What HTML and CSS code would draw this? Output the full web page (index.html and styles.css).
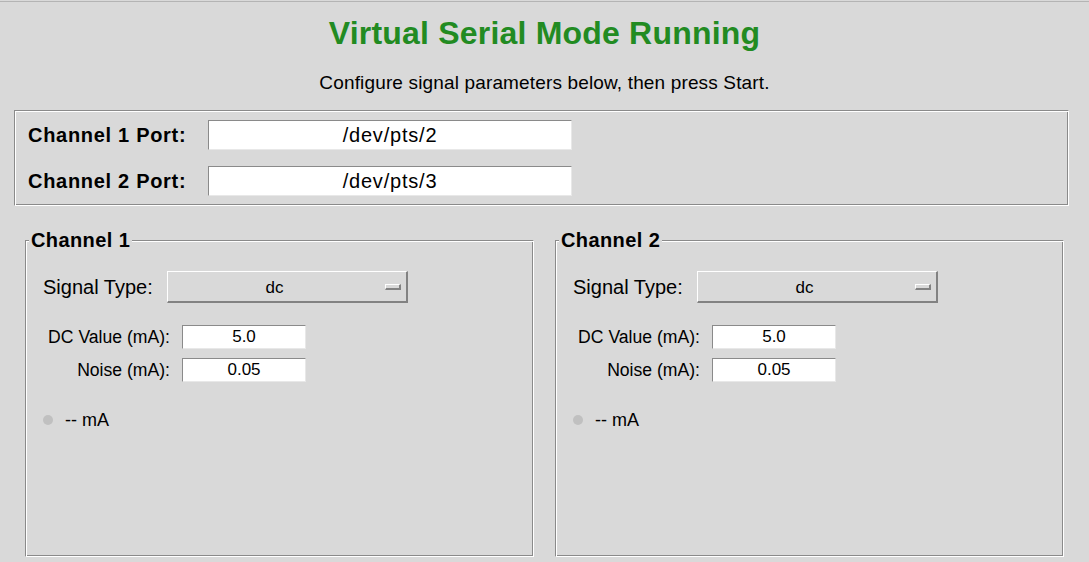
FILE: index.html
```html
<!DOCTYPE html>
<html>

<head>
    <meta charset="utf-8">
    <title>Virtual Serial Mode</title>
    <link rel="stylesheet" href="styles.css">
</head>

<body>
    <div class="app">
        <header class="intro">
            <h1 class="title">Virtual Serial Mode Running</h1>
            <p class="subtitle">Configure signal parameters below, then press Start.</p>
        </header>

        <section class="ports">
            <label class="port-label" for="port1">Channel 1 Port:</label>
            <input class="port-entry" id="port1" type="text" value="/dev/pts/2">
            <label class="port-label" for="port2">Channel 2 Port:</label>
            <input class="port-entry" id="port2" type="text" value="/dev/pts/3">
        </section>

        <div class="channels">
            <fieldset class="channel">
                <legend>Channel 1</legend>
                <div class="signal-row">
                    <span class="signal-label">Signal Type:</span>
                    <div class="option-menu">
                        <span class="option-text">dc</span>
                        <span class="indicator"></span>
                    </div>
                </div>
                <div class="params">
                    <label for="dc1">DC Value (mA):</label>
                    <input class="param-entry" id="dc1" type="text" value="5.0">
                    <label for="noise1">Noise (mA):</label>
                    <input class="param-entry" id="noise1" type="text" value="0.05">
                </div>
                <div class="status">
                    <span class="dot"></span>
                    <span class="reading">-- mA</span>
                </div>
            </fieldset>

            <fieldset class="channel">
                <legend>Channel 2</legend>
                <div class="signal-row">
                    <span class="signal-label">Signal Type:</span>
                    <div class="option-menu">
                        <span class="option-text">dc</span>
                        <span class="indicator"></span>
                    </div>
                </div>
                <div class="params">
                    <label for="dc2">DC Value (mA):</label>
                    <input class="param-entry" id="dc2" type="text" value="5.0">
                    <label for="noise2">Noise (mA):</label>
                    <input class="param-entry" id="noise2" type="text" value="0.05">
                </div>
                <div class="status">
                    <span class="dot"></span>
                    <span class="reading">-- mA</span>
                </div>
            </fieldset>
        </div>
    </div>
</body>

</html>
```

FILE: styles.css
```css
body {
    margin: 0;
    padding: 1px 0 0 0;
    background-color: #d9d9d9;
    color: #000;
    font-family: "Liberation Sans", Arial, sans-serif;
}

.app {
    height: 560px;
    display: flex;
    flex-direction: column;
    border-top: 1px solid #b4b4b4;
}

.intro {
    text-align: center;
}

.title {
    margin: 13px 0 0 0;
    font-size: 32px;
    line-height: 36px;
    font-weight: bold;
    letter-spacing: 0.2px;
    color: #228b22;
}

.subtitle {
    margin: 21px 0 0 0;
    font-size: 19px;
    line-height: 22px;
    letter-spacing: 0.15px;
}

/* groove look: dark/light outer ring, light/dark inner ring */
.ports,
.channel {
    border: 1px solid;
    border-color: #8a8a8a #fff #fff #8a8a8a;
    box-shadow: inset 1px 1px 0 #fff, inset -1px -1px 0 #8a8a8a;
}

.ports {
    margin: 16px 20px 0 14px;
    padding: 9px 0 9px 13px;
    display: grid;
    grid-template-columns: 180px 364px;
    row-gap: 16px;
    align-items: center;
}

.port-label {
    font-size: 20px;
    font-weight: bold;
    letter-spacing: 0.7px;
}

.port-entry {
    box-sizing: border-box;
    width: 364px;
    height: 30px;
    margin: 0;
    padding: 0;
    border: 1px solid;
    border-color: #8a8a8a #e8e8e8 #e8e8e8 #8a8a8a;
    background: #fff;
    font-family: inherit;
    font-size: 20px;
    letter-spacing: 0.8px;
    text-align: center;
    color: #000;
}

.channels {
    flex: 1;
    display: flex;
    gap: 21px;
    margin-top: 23px;
    padding: 0 25px 5px 25px;
}

.channel {
    flex: 1;
    min-width: 0;
    margin: 0;
    padding: 20px 0 0 0;
}

.channel legend {
    margin-left: 3px;
    padding: 0 2px;
    font-size: 20px;
    line-height: 22px;
    font-weight: bold;
    letter-spacing: 0.4px;
    background: #d9d9d9;
}

.signal-row {
    display: flex;
    align-items: center;
    margin-left: 17px;
}

.signal-label {
    width: 124px;
    font-size: 20px;
}

.option-menu {
    box-sizing: border-box;
    width: 241px;
    height: 32px;
    display: flex;
    align-items: center;
    border-style: solid;
    border-width: 1px 2px 2px 1px;
    border-color: #fff #828282 #828282 #fff;
}

.option-text {
    flex: 1;
    text-align: center;
    font-size: 17px;
    padding-top: 2px;
}

.indicator {
    box-sizing: border-box;
    width: 16px;
    height: 6px;
    margin: 0 5px 0 4px;
    border-style: solid;
    border-width: 1px 2px 2px 1px;
    border-color: #fff #828282 #828282 #fff;
}

.params {
    display: grid;
    grid-template-columns: 134px 124px;
    row-gap: 9px;
    align-items: center;
    margin: 22px 0 0 22px;
}

.params label {
    padding-right: 12px;
    text-align: right;
    font-size: 17.6px;
}

.param-entry {
    box-sizing: border-box;
    width: 124px;
    height: 24px;
    margin: 0;
    padding: 0;
    border: 1px solid;
    border-color: #8a8a8a #e8e8e8 #e8e8e8 #8a8a8a;
    background: #fff;
    font-family: inherit;
    font-size: 17px;
    text-align: center;
    color: #000;
}

.status {
    display: flex;
    align-items: center;
    gap: 12px;
    margin: 28px 0 0 17px;
    height: 20px;
}

.dot {
    width: 10px;
    height: 10px;
    border-radius: 50%;
    background: #c0c0c0;
}

.reading {
    font-size: 18px;
}
```
